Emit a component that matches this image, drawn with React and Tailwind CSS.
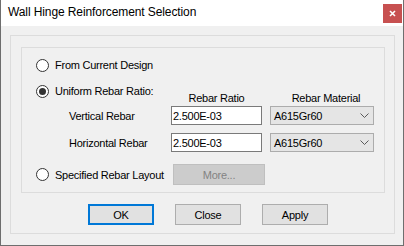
const Radio = ({ checked = false, label }) => (
  <div className="flex items-center h-[14px]">
    <div className="w-[13px] h-[13px] rounded-full border border-[#333333] bg-white flex items-center justify-center">
      {checked && <div className="w-[7px] h-[7px] rounded-full bg-[#333333]"></div>}
    </div>
    <span className="ml-[6px] leading-[14px]">{label}</span>
  </div>
);

const Chevron = () => (
  <svg width="9" height="5" viewBox="0 0 9 5" className="shrink-0">
    <path d="M0.5 0.5 L4.5 4.5 L8.5 0.5" fill="none" stroke="#5a5a5a" strokeWidth="1" />
  </svg>
);

const RebarRow = ({ label, ratio, material }) => (
  <div className="flex items-center h-[19px]">
    <div className="w-[135px] pl-[33px] leading-[14px]">{label}</div>
    <div className="w-[91px] h-[19px] border border-[#7a7a7a] bg-white px-[1px] flex items-center leading-[14px]">
      {ratio}
    </div>
    <div className="ml-[8px] w-[104px] h-[19px] border border-[#acacac] bg-[#e5e5e5] pl-[3px] pr-[4px] flex items-center justify-between leading-[14px]">
      <span>{material}</span>
      <Chevron />
    </div>
  </div>
);

const Button = ({ children, focused = false }) => (
  <button
    className={
      focused
        ? "w-[66px] h-[21px] border-2 border-[#0078d7] bg-[#e1e1e1] leading-[14px]"
        : "w-[66px] h-[21px] border border-[#adadad] bg-[#e1e1e1] leading-[14px]"
    }
  >
    {children}
  </button>
);

export default function App() {
  return (
    <div
      className="w-[404px] h-[246px] bg-[#f0f0f0] border-x border-b border-[#6e6e6e] flex flex-col text-[11px] tracking-[-0.25px] text-black"
      style={{ fontFamily: '"Liberation Sans", Arial, sans-serif' }}
    >
      {/* Title bar */}
      <div className="h-[26px] bg-white flex items-start shrink-0">
        <div className="pl-[7px] pt-[5px] text-[12px] leading-[15px] tracking-[-0.1px] flex-1">
          Wall Hinge Reinforcement Selection
        </div>
        <div className="mt-[4px] mr-[1px] w-[19px] h-[19px] bg-[#c75050] flex items-center justify-center">
          <svg width="7" height="7" viewBox="0 0 7 7">
            <path d="M1 1 L6 6 M6 1 L1 6" stroke="white" strokeWidth="1.6" />
          </svg>
        </div>
      </div>

      {/* Body */}
      <div className="pt-[9px] pl-[9px] pr-[8px]">
        <div className="h-[199px] border border-[#dcdcdc] pt-[11px] pl-[10px] pr-[9px]">
          {/* Inner group */}
          <div className="h-[146px] border border-[#dcdcdc] pl-[14px] pt-[10px]">
            <Radio label="From Current Design" />

            <div className="mt-[12px] flex h-[21px]">
              <div className="w-[135px]">
                <Radio checked label="Uniform Rebar Ratio:" />
              </div>
              <div className="w-[91px] self-end text-center leading-[14px]">Rebar Ratio</div>
              <div className="ml-[8px] w-[104px] self-end text-center leading-[14px] pl-[8px]">Rebar Material</div>
            </div>

            <div className="mt-[1px]">
              <RebarRow label="Vertical Rebar" ratio="2.500E-03" material="A615Gr60" />
            </div>
            <div className="mt-[8px]">
              <RebarRow label="Horizontal Rebar" ratio="2.500E-03" material="A615Gr60" />
            </div>

            <div className="mt-[12px] flex items-center h-[21px]">
              <div className="w-[137px]">
                <Radio label="Specified Rebar Layout" />
              </div>
              <div className="w-[92px] h-[21px] border border-[#bfbfbf] bg-[#cccccc] text-[#838383] flex items-center justify-center leading-[14px]">
                More...
              </div>
            </div>
          </div>

          {/* Buttons */}
          <div className="mt-[11px] pl-[67px] flex gap-[21px]">
            <Button focused>OK</Button>
            <Button>Close</Button>
            <Button>Apply</Button>
          </div>
        </div>
      </div>
    </div>
  );
}
